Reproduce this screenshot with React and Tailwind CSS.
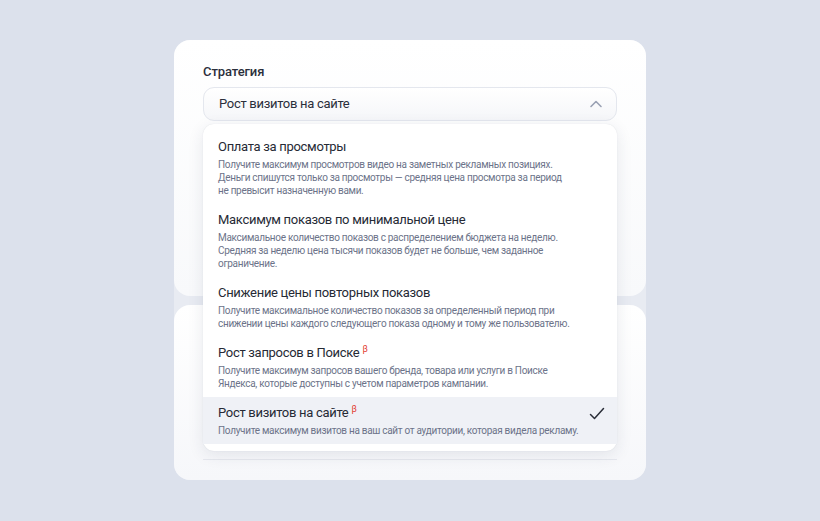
import React from "react";

const OPTIONS = [
  {
    title: "Оплата за просмотры",
    lines: [
      "Получите максимум просмотров видео на заметных рекламных позициях.",
      "Деньги спишутся только за просмотры — средняя цена просмотра за период",
      "не превысит назначенную вами.",
    ],
  },
  {
    title: "Максимум показов по минимальной цене",
    lines: [
      "Максимальное количество показов с распределением бюджета на неделю.",
      "Средняя за неделю цена тысячи показов будет не больше, чем заданное",
      "ограничение.",
    ],
  },
  {
    title: "Снижение цены повторных показов",
    lines: [
      "Получите максимальное количество показов за определенный период при",
      "снижении цены каждого следующего показа одному и тому же пользователю.",
    ],
  },
  {
    title: "Рост запросов в Поиске",
    lines: [
      "Получите максимум запросов вашего бренда, товара или услуги в Поиске",
      "Яндекса, которые доступны с учетом параметров кампании.",
    ],
    beta: true,
  },
  {
    title: "Рост визитов на сайте",
    lines: ["Получите максимум визитов на ваш сайт от аудитории, которая видела рекламу."],
    beta: true,
    selected: true,
  },
];

export default function App() {
  return (
    <div
      className="flex h-[521px] w-full justify-center bg-[#dce1ec] pt-[40px]"
      style={{ fontFamily: "Roboto, 'Noto Sans', sans-serif" }}
    >
      <div className="flex h-[440px] w-[472px] flex-col gap-[9px] rounded-[16px] bg-[#e8ebf2]">
        {/* Top card */}
        <div className="h-[256px] rounded-[16px] bg-gradient-to-b from-white to-[#f8f9fb] px-[29px] pt-[24px]">
          <div className="text-[13px] font-medium leading-[16px] tracking-[-0.1px] text-[#2b2f3b]">Стратегия</div>
          <div className="relative mt-[7px]">
            <div className="flex h-[34px] items-center justify-between rounded-[11px] border border-[#e4e7ee] bg-gradient-to-b from-white to-[#f5f6f9] pl-[15px] pr-[12px]">
              <span className="text-[13px] tracking-[-0.3px] text-[#2b2f3b]">Рост визитов на сайте</span>
              <svg width="16" height="16" viewBox="0 0 16 16" fill="none">
                <path d="M3 10.5 8 5.5l5 5" stroke="#9aa1b4" strokeWidth="1.6" strokeLinecap="round" strokeLinejoin="round" />
              </svg>
            </div>

            {/* Dropdown */}
            <div className="absolute left-0 right-0 top-[37px] z-10 rounded-[11px] bg-white py-[7px] shadow-[0_4px_16px_rgba(40,50,80,0.10),0_0_1px_rgba(40,50,80,0.15)]">
              {OPTIONS.map((o) => (
                <div
                  key={o.title}
                  className={`flex items-start justify-between pl-[15px] pr-[11px] py-[7px] ${o.selected ? "bg-[#eff1f6]" : ""}`}
                >
                  <div>
                    <div className="text-[13px] leading-[18px] tracking-[-0.3px] text-[#262a35]">
                      {o.title}
                      {o.beta && (
                        <span className="relative -top-[5px] ml-[3px] text-[9px] leading-[10px] text-[#e23a2e]">β</span>
                      )}
                    </div>
                    <div className="mt-[2px] text-[10px] leading-[13px] tracking-[-0.3px] text-[#6c7389]">
                      {o.lines.map((l) => (
                        <div key={l} className="whitespace-nowrap">{l}</div>
                      ))}
                    </div>
                  </div>
                  {o.selected && (
                    <svg className="mt-[1px] shrink-0" width="18" height="18" viewBox="0 0 18 18" fill="none">
                      <path d="M2.5 9.5 6.5 13.5 15.5 3.5" stroke="#2a2e38" strokeWidth="1.5" strokeLinecap="round" strokeLinejoin="round" />
                    </svg>
                  )}
                </div>
              ))}
            </div>
          </div>
        </div>

        {/* Bottom card */}
        <div className="flex flex-1 flex-col justify-end rounded-[16px] bg-gradient-to-b from-white to-[#f6f7fa] px-[29px] pb-[20px]">
          <div className="h-px bg-[#e6e8ee]" />
        </div>
      </div>
    </div>
  );
}
